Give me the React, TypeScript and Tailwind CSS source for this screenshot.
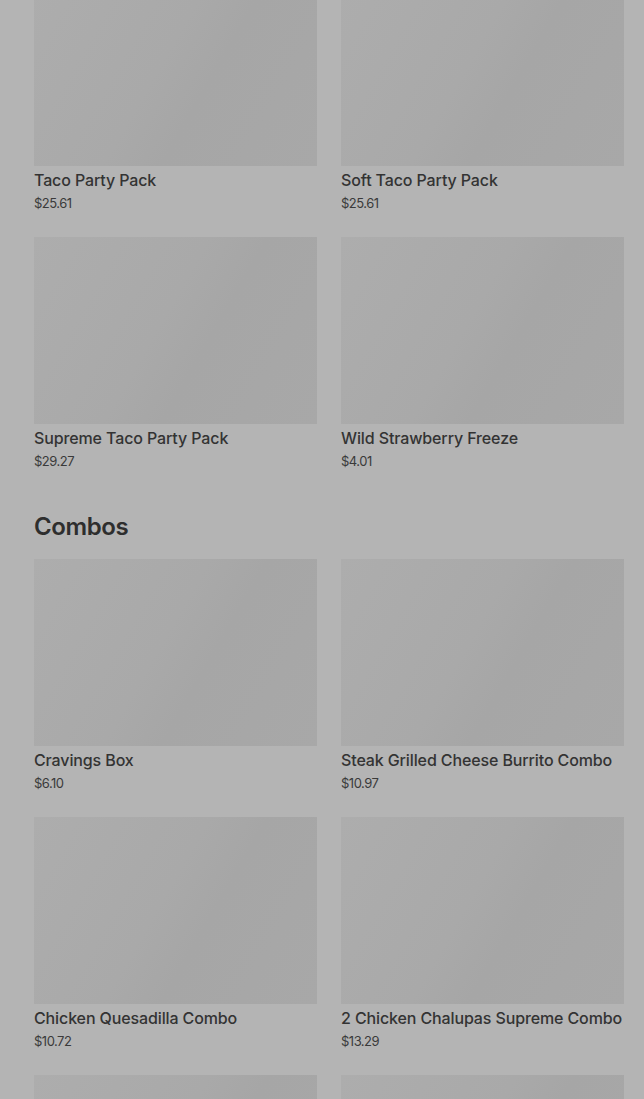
import React from "react";

type Item = { name: string; price: string };

const top: Item[] = [
  { name: "Taco Party Pack", price: "$25.61" },
  { name: "Soft Taco Party Pack", price: "$25.61" },
  { name: "Supreme Taco Party Pack", price: "$29.27" },
  { name: "Wild Strawberry Freeze", price: "$4.01" },
];

const combos: Item[] = [
  { name: "Cravings Box", price: "$6.10" },
  { name: "Steak Grilled Cheese Burrito Combo", price: "$10.97" },
  { name: "Chicken Quesadilla Combo", price: "$10.72" },
  { name: "2 Chicken Chalupas Supreme Combo", price: "$13.29" },
];

const imgCls =
  "h-[187px] w-full bg-[linear-gradient(120deg,#adadad_0%,#a9a9a9_45%,#a6a6a6_60%,#a8a8a8_100%)]";

function Card({ item }: { item: Item }) {
  return (
    <div className="flex flex-col">
      <div className={imgCls} />
      <div className="mt-[2px] h-6 text-[16px] leading-6 font-medium tracking-[-0.12px] text-[#333333] whitespace-nowrap">
        {item.name}
      </div>
      <div className="mt-[1px] h-5 text-[13px] leading-5 font-normal tracking-[-0.5px] text-[#3a3a3a]">
        {item.price}
      </div>
    </div>
  );
}

export default function App() {
  return (
    <div
      className="h-[1099px] overflow-hidden bg-[#b4b4b4]"
      style={{ fontFamily: "Inter, 'Noto Sans', sans-serif" }}
    >
      <div className="mt-[-21px] pl-[34px] pr-[20px]">
        <div className="grid grid-cols-2 gap-x-6 gap-y-[24px]">
          {top.map((it) => (
            <Card key={it.name} item={it} />
          ))}
        </div>
        <h2 className="mt-[40px] mb-[16px] h-8 text-[24px] leading-8 font-semibold tracking-[-0.4px] text-[#2e2e2e]">
          Combos
        </h2>
        <div className="grid grid-cols-2 gap-x-6 gap-y-[24px]">
          {combos.map((it) => (
            <Card key={it.name} item={it} />
          ))}
          <div className={imgCls} />
          <div className={imgCls} />
        </div>
      </div>
    </div>
  );
}
